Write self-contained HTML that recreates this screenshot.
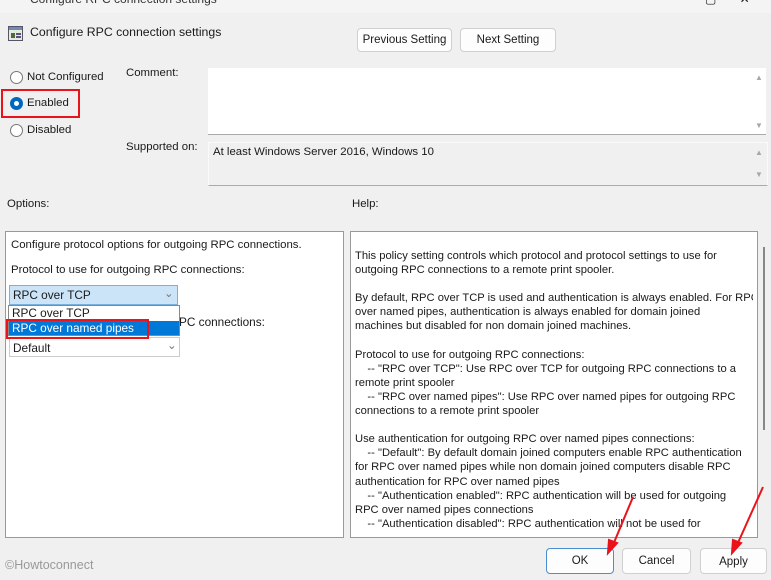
<!DOCTYPE html>
<html><head><style>
body{margin:0;width:771px;height:580px;overflow:hidden;background:#f0f0f0;font-family:"Liberation Sans",sans-serif;font-size:11.4px;color:#1a1a1a;position:relative}
.a{position:absolute;white-space:nowrap}
.btn{position:absolute;background:#fdfdfd;border:1px solid #d0d0d0;border-radius:4px;text-align:center;font-size:11.5px;box-sizing:border-box}
.radio{position:absolute;width:11px;height:11px;border:1px solid #777;border-radius:50%;background:#fff}
.red{position:absolute;border:2px solid #e8131b}
.sb{position:absolute;color:#a8a8a8;font-size:8px}
</style></head><body>
<div class="a" style="left:0;top:0;width:771px;height:13px;background:#f4f4f4"></div>
<div class="a" style="left:30px;top:-8px;font-size:12px;color:#333">Configure RPC connection settings</div>
<div class="a" style="left:705px;top:-8px;font-size:12px">▢ &nbsp;&nbsp;&nbsp;&nbsp;&nbsp; ✕</div>
<svg class="a" style="left:8px;top:26px" width="15" height="15"><rect x="0.5" y="0.5" width="14" height="14" fill="#e8e8e0" stroke="#556"/><rect x="1" y="1" width="13" height="3" fill="#6a8fb0"/><rect x="3" y="7" width="4" height="5" fill="#4a6a3a"/><rect x="8" y="7" width="5" height="2" fill="#557"/><rect x="8" y="10" width="5" height="2" fill="#557"/></svg>
<div class="a" style="left:30px;top:25px;font-size:12.3px">Configure RPC connection settings</div>
<div class="btn" style="left:357px;top:28px;width:95px;height:24px;line-height:22px">Previous Setting</div>
<div class="btn" style="left:460px;top:28px;width:96px;height:24px;line-height:22px">Next Setting</div>

<div class="radio" style="left:10px;top:71px"></div><div class="a" style="left:27px;top:71px">Not Configured</div>
<div class="radio" style="left:10px;top:97px;border-color:#0067c0;background:#0067c0"></div><div class="a" style="left:14px;top:101px;width:5px;height:5px;border-radius:50%;background:#fff"></div>
<div class="a" style="left:27px;top:97px">Enabled</div>
<div class="red" style="left:1px;top:89px;width:75px;height:25px"></div>
<div class="radio" style="left:10px;top:124px"></div><div class="a" style="left:27px;top:124px">Disabled</div>

<div class="a" style="left:126px;top:67px">Comment:</div>
<div class="a" style="left:208px;top:68px;width:558px;height:66px;background:#fff;border-bottom:1px solid #aaa"></div>
<div class="sb" style="left:755px;top:73px">▲</div><div class="sb" style="left:755px;top:121px">▼</div>
<div class="a" style="left:126px;top:141px">Supported on:</div>
<div class="a" style="left:208px;top:142px;width:558px;height:42px;background:#f0f0f0;border:1px solid #fafafa;border-bottom:1px solid #aaa"></div>
<div class="a" style="left:213px;top:146px">At least Windows Server 2016, Windows 10</div>
<div class="sb" style="left:755px;top:148px">▲</div><div class="sb" style="left:755px;top:170px">▼</div>

<div class="a" style="left:7px;top:198px">Options:</div>
<div class="a" style="left:352px;top:198px">Help:</div>

<div class="a" style="left:5px;top:231px;width:337px;height:305px;background:#fff;border:1px solid #999"></div>
<div class="a" style="left:11px;top:239px">Configure protocol options for outgoing RPC connections.</div>
<div class="a" style="left:11px;top:264px">Protocol to use for outgoing RPC connections:</div>
<div class="a" style="left:9px;top:285px;width:169px;height:20px;background:#cce4f7;border:1px solid #7ab0dd;box-sizing:border-box"></div>
<div class="a" style="left:13px;top:288px;font-size:11.8px">RPC over TCP</div>
<div class="a" style="left:164px;top:286px;color:#777">⌄</div>
<div class="a" style="left:179px;top:315px;font-size:11.8px">PC connections:</div>
<div class="a" style="left:9px;top:337px;width:171px;height:20px;background:#fff;border:1px solid #ccc;box-sizing:border-box"></div>
<div class="a" style="left:13px;top:341px;font-size:11.8px">Default</div>
<div class="a" style="left:167px;top:338px;color:#777">⌄</div>
<div class="a" style="left:8px;top:305px;width:172px;height:31px;background:#fff;border:1px solid #888;box-sizing:border-box"></div>
<div class="a" style="left:9px;top:321px;width:170px;height:14px;background:#0078d7"></div>
<div class="a" style="left:12px;top:306px;font-size:11.8px">RPC over TCP</div>
<div class="a" style="left:12px;top:321px;font-size:11.8px;color:#fff">RPC over named pipes</div>
<div class="red" style="left:6px;top:319px;width:139px;height:16px"></div>

<div class="a" style="left:350px;top:231px;width:406px;height:305px;background:#fff;border:1px solid #999"></div>
<div class="a" style="left:763px;top:247px;width:2px;height:183px;background:#888"></div>
<div class="a" style="left:355px;top:249px;line-height:14.1px;font-size:11.2px;width:398px;overflow:hidden">This policy setting controls which protocol and protocol settings to use for<br>outgoing RPC connections to a remote print spooler.<br><br>By default, RPC over TCP is used and authentication is always enabled. For RPC<br>over named pipes, authentication is always enabled for domain joined<br>machines but disabled for non domain joined machines.<br><br>Protocol to use for outgoing RPC connections:<br>&nbsp;&nbsp;&nbsp; -- "RPC over TCP": Use RPC over TCP for outgoing RPC connections to a<br>remote print spooler<br>&nbsp;&nbsp;&nbsp; -- "RPC over named pipes": Use RPC over named pipes for outgoing RPC<br>connections to a remote print spooler<br><br>Use authentication for outgoing RPC over named pipes connections:<br>&nbsp;&nbsp;&nbsp; -- "Default": By default domain joined computers enable RPC authentication<br>for RPC over named pipes while non domain joined computers disable RPC<br>authentication for RPC over named pipes<br>&nbsp;&nbsp;&nbsp; -- "Authentication enabled": RPC authentication will be used for outgoing<br>RPC over named pipes connections<br>&nbsp;&nbsp;&nbsp; -- "Authentication disabled": RPC authentication will not be used for</div>
<div class="a" style="left:351px;top:532px;width:405px;height:4px;background:#fff"></div>

<div class="btn" style="left:546px;top:548px;width:68px;height:26px;line-height:24px;border:1.5px solid #4a8fd0">OK</div>
<div class="btn" style="left:622px;top:548px;width:69px;height:26px;line-height:24px">Cancel</div>
<div class="btn" style="left:700px;top:548px;width:67px;height:26px;line-height:26px">Apply</div>
<div class="a" style="left:5px;top:558px;font-size:12.5px;color:#999">©Howtoconnect</div>

<svg class="a" style="left:0;top:0" width="771" height="580">
<g stroke="#e8131b" stroke-width="2" fill="#e8131b">
<line x1="633" y1="497" x2="613" y2="545"/><polygon points="608,553 609,540 617,543"/>
<line x1="763" y1="487" x2="737" y2="545"/><polygon points="732,553 733,540 741,543"/>
</g></svg>
</body></html>
